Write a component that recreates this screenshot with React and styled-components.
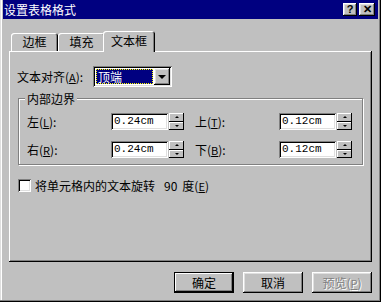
import styled, { createGlobalStyle } from 'styled-components';

const GlobalStyle = createGlobalStyle`
    html, body {
        margin: 0;
        padding: 0;
        background: #c0c0c0;
    }
    * {
        box-sizing: border-box;
    }
`;

const raised = `
    box-shadow: inset -1px -1px #000, inset 1px 1px #fff, inset -2px -2px #808080, inset 2px 2px #dfdfdf;
`;

const sunken = `
    box-shadow: inset 1px 1px #808080, inset -1px -1px #fff, inset 2px 2px #000, inset -2px -2px #dfdfdf;
`;

const Window = styled.div`
    width: 381px;
    height: 302px;
    background: #c0c0c0;
    padding: 0 3px;
    box-shadow: inset -1px -1px #000, inset -2px -2px #808080, inset 1px 0 #dfdfdf, inset 2px 0 #fff;
    font-family: "Noto Sans CJK SC", "DejaVu Sans", sans-serif;
    font-size: 12px;
    color: #000;
    display: flex;
    flex-direction: column;
`;

const TitleBar = styled.div`
    height: 19px;
    background: #000080;
    display: flex;
    align-items: center;
    justify-content: space-between;
    padding: 0 3px 0 1px;
`;

const Title = styled.span`
    color: #fff;
    font-size: 12px;
    line-height: 19px;
`;

const CapButtons = styled.div`
    display: flex;
    gap: 2px;
`;

const CapButton = styled.div`
    width: ${ props => props.$w || 15 }px;
    height: 13px;
    background: #c0c0c0;
    ${ raised }
    display: flex;
    align-items: center;
    justify-content: center;
    font-family: "Liberation Sans", sans-serif;
    font-weight: bold;
    font-size: 11px;
    line-height: 1;
`;

const Body = styled.div`
    padding: 12px 6px 0 6px;
    display: flex;
    flex-direction: column;
`;

const TabRow = styled.div`
    height: 20px;
    display: flex;
    align-items: flex-end;
    padding-left: 2px;
    position: relative;
    z-index: 1;
`;

const Tab = styled.div`
    height: ${ props => props.$active ? 21 : 18 }px;
    width: ${ props => props.$w }px;
    margin: ${ props => props.$active ? '0 -2px -1px -2px' : '0' };
    padding-top: ${ props => props.$active ? 1 : 0 }px;
    background: #c0c0c0;
    border-radius: 3px 3px 0 0;
    box-shadow: inset 1px 1px #fff, inset -1px 0 #000, inset -2px 0 #808080;
    display: flex;
    justify-content: center;
    line-height: 17px;
`;

const Panel = styled.div`
    height: 211px;
    box-shadow: inset -1px -1px #000, inset 1px 1px #fff, inset -2px -2px #808080;
    padding: 15px 0 0 8px;
    display: flex;
    flex-direction: column;
`;

const AlignRow = styled.div`
    display: flex;
    align-items: center;
    height: 21px;
`;

const Label = styled.span`
    width: ${ props => props.$w }px;
    flex: none;
    white-space: nowrap;
    line-height: 16px;
`;

const Key = styled.span`
    text-decoration: underline;
    font-size: 11px;
`;

const Combo = styled.div`
    width: 79px;
    height: 21px;
    background: #fff;
    ${ sunken }
    padding: 2px;
    display: flex;
`;

const ComboValue = styled.div`
    flex: 1;
    margin: 1px;
    background: #000080;
    color: #fff;
    border: 1px dotted #ffff00;
    line-height: 13px;
    padding-left: 1px;
`;

const DropButton = styled.div`
    width: 16px;
    height: 17px;
    background: #c0c0c0;
    ${ raised }
    display: flex;
    align-items: center;
    justify-content: center;
`;

const Arrow = styled.div`
    width: 0;
    height: 0;
    border-left: ${ props => props.$size }px solid transparent;
    border-right: ${ props => props.$size }px solid transparent;
    ${ props => props.$up
        ? `border-bottom: ${ props.$size }px solid #000;`
        : `border-top: ${ props.$size }px solid #000;` }
`;

const Group = styled.div`
    margin: 11px 0 0 1px;
    width: 345px;
    height: 67px;
    border: 1px solid #808080;
    box-shadow: inset 1px 1px #fff, 1px 1px #fff;
    padding: 0 0 0 8px;
    display: flex;
    flex-direction: column;
`;

const Legend = styled.div`
    margin: -8px 0 0 -2px;
    padding: 0 2px;
    align-self: flex-start;
    background: #c0c0c0;
    line-height: 15px;
`;

const FieldGrid = styled.div`
    margin-top: 7px;
    display: grid;
    grid-template-columns: 168px 168px;
    row-gap: 11px;
`;

const Field = styled.div`
    display: flex;
    align-items: center;
    height: 17px;
`;

const Input = styled.div`
    width: 57px;
    height: 17px;
    background: #fff;
    ${ sunken }
    font-family: "Liberation Mono", monospace;
    font-size: 11px;
    line-height: 17px;
    padding-left: 3px;
`;

const Spinner = styled.div`
    width: 15px;
    height: 17px;
    margin-left: 1px;
    display: flex;
    flex-direction: column;
`;

const SpinHalf = styled.div`
    flex: 1;
    background: #c0c0c0;
    box-shadow: inset -1px -1px #000, inset 1px 1px #fff;
    display: flex;
    align-items: center;
    justify-content: center;
`;

const CheckRow = styled.div`
    margin-top: 12px;
    margin-left: 1px;
    display: flex;
    align-items: center;
    gap: 4px;
    white-space: nowrap;
`;

const CheckBox = styled.div`
    width: 13px;
    height: 13px;
    background: #fff;
    ${ sunken }
`;

const Num = styled.span`
    margin: 0 5px 0 9px;
`;

const Footer = styled.div`
    margin-top: 10px;
    display: flex;
    justify-content: flex-end;
    gap: 9px;
`;

const Button = styled.div`
    width: 60px;
    height: 21px;
    background: #c0c0c0;
    ${ props => props.$default
        ? 'box-shadow: inset 0 0 0 1px #000, inset -2px -2px #000, inset 2px 2px #fff, inset -3px -3px #808080;'
        : raised }
    display: flex;
    align-items: center;
    justify-content: center;
    line-height: 16px;
    color: ${ props => props.$disabled ? '#808080' : '#000' };
    text-shadow: ${ props => props.$disabled ? '1px 1px #fff' : 'none' };
`;

function NumberField( { label, k, value } ) {
    return (
        <Field>
            <Label $w={ 84 }>{ label }(<Key>{ k }</Key>):</Label>
            <Input>{ value }</Input>
            <Spinner>
                <SpinHalf><Arrow $up $size={ 2 } /></SpinHalf>
                <SpinHalf><Arrow $size={ 2 } /></SpinHalf>
            </Spinner>
        </Field>
    );
}

export default function App() {
    return (
        <>
            <GlobalStyle />
            <Window>
                <TitleBar>
                    <Title>设置表格格式</Title>
                    <CapButtons>
                        <CapButton $w={ 14 }>?</CapButton>
                        <CapButton $w={ 16 }>✕</CapButton>
                    </CapButtons>
                </TitleBar>
                <Body>
                    <TabRow>
                        <Tab $w={ 47 }>边框</Tab>
                        <Tab $w={ 47 }>填充</Tab>
                        <Tab $w={ 52 } $active>文本框</Tab>
                    </TabRow>
                    <Panel>
                        <AlignRow>
                            <Label $w={ 76 }>文本对齐(<Key>A</Key>):</Label>
                            <Combo>
                                <ComboValue>顶端</ComboValue>
                                <DropButton><Arrow $size={ 4 } /></DropButton>
                            </Combo>
                        </AlignRow>
                        <Group>
                            <Legend>内部边界</Legend>
                            <FieldGrid>
                                <NumberField label="左" k="L" value="0.24cm" />
                                <NumberField label="上" k="T" value="0.12cm" />
                                <NumberField label="右" k="R" value="0.24cm" />
                                <NumberField label="下" k="B" value="0.12cm" />
                            </FieldGrid>
                        </Group>
                        <CheckRow>
                            <CheckBox />
                            <span>将单元格内的文本旋转<Num>90</Num>度(<Key>E</Key>)</span>
                        </CheckRow>
                    </Panel>
                    <Footer>
                        <Button $default>确定</Button>
                        <Button>取消</Button>
                        <Button $disabled>预览(<Key>P</Key>)</Button>
                    </Footer>
                </Body>
            </Window>
        </>
    );
}
